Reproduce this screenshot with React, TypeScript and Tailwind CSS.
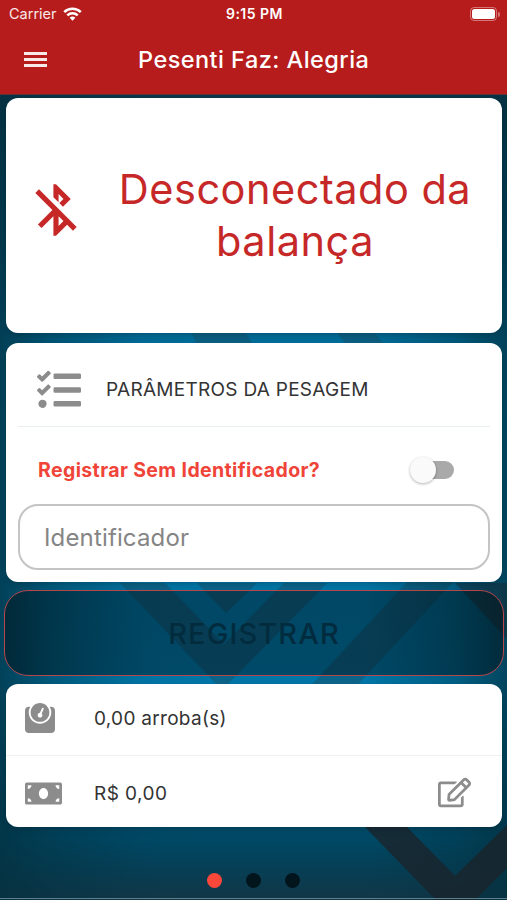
import { FaMoneyBill, FaRegEdit, FaTasks, FaWeight } from 'react-icons/fa';
import { MdBluetoothDisabled } from 'react-icons/md';

const Background: React.FC = () => (
  <svg
    className="absolute inset-0 -z-10 h-full w-full"
    viewBox="0 0 507 900"
    preserveAspectRatio="none"
    aria-hidden="true"
  >
    <defs>
      <linearGradient id="depth" x1="0" y1="0" x2="0" y2="1">
        <stop offset="0.1" stopColor="#0c3447" />
        <stop offset="0.25" stopColor="#00486a" />
        <stop offset="0.38" stopColor="#006c98" />
        <stop offset="0.75" stopColor="#0077a8" />
        <stop offset="0.88" stopColor="#005075" />
        <stop offset="0.935" stopColor="#004864" />
        <stop offset="0.965" stopColor="#063f56" />
        <stop offset="1" stopColor="#123646" />
      </linearGradient>
      <linearGradient id="sides" x1="0" y1="0" x2="1" y2="0">
        <stop offset="0" stopColor="#03303f" stopOpacity="0.75" />
        <stop offset="0.1" stopColor="#03303f" stopOpacity="0.42" />
        <stop offset="0.28" stopColor="#03303f" stopOpacity="0.04" />
        <stop offset="0.4" stopColor="#03303f" stopOpacity="0" />
        <stop offset="0.72" stopColor="#03303f" stopOpacity="0" />
        <stop offset="0.9" stopColor="#03303f" stopOpacity="0.35" />
        <stop offset="1" stopColor="#03303f" stopOpacity="0.7" />
      </linearGradient>
    </defs>
    <rect width="507" height="900" fill="url(#depth)" />
    <g fill="#17506a" fillOpacity="0.5">
      <path d="M120 583h45l59 61 60-61h43L222 690z" />
      <path d="M197 583h60l-31 30z" />
      <path d="M408 581h46L350 693h-46z" />
      <path d="M192 333h54l6 10h-56zM337 333h38l8 10h-38z" />
    </g>
    <rect width="507" height="900" fill="url(#sides)" />
    <path d="M455 583h52v56z" fill="#1b2830" fillOpacity="0.45" />
    <path d="M363 825h42l50 51 52-51v43l-32 32h-39z" fill="#1a242c" fillOpacity="0.8" />
    <path d="M0 898.5h507" stroke="#5c7f8d" />
  </svg>
);

const StatusBar: React.FC = () => (
  <div className="grid h-7 grid-cols-3 items-center pr-[7px] pl-[9px] leading-none">
    <div className="flex items-center gap-[6px]">
      <span className="text-[14.5px] text-white/90">Carrier</span>
      <svg width="19" height="14" viewBox="0 0 19 14" fill="none" stroke="#fff" strokeWidth="2.5">
        <path d="M1.2 5.1a11.8 11.8 0 0 1 16.6 0" />
        <path d="M4.3 8.3a7.4 7.4 0 0 1 10.4 0" />
        <path d="M9.5 13.8 6.6 10.8a4.2 4.2 0 0 1 5.8 0z" fill="#fff" stroke="none" />
      </svg>
    </div>
    <span className="text-center text-[14px] font-semibold tracking-[0.5px]">9:15 PM</span>
    <div className="flex items-center justify-end gap-px">
      <div className="h-[14px] w-[27px] rounded-[4px] border border-white/40 p-px">
        <div className="h-full w-full rounded-[2.5px] bg-white" />
      </div>
      <div className="h-[5px] w-[2px] rounded-r-full bg-white/40" />
    </div>
  </div>
);

const Header: React.FC = () => (
  <header className="h-[95px] border-b border-[#63303a] bg-[#b71c1c] text-white">
    <StatusBar />
    <div className="flex h-16 items-center">
      <button type="button" aria-label="Menu" className="mb-px ml-6 flex w-[23px] flex-col gap-[3px]">
        <span className="h-[3px] bg-white/90" />
        <span className="h-[3px] bg-white/90" />
        <span className="h-[3px] bg-white/90" />
      </button>
      <h1 className="ml-[91px] text-[23.5px] leading-none font-medium tracking-[0.45px] whitespace-nowrap">
        Pesenti Faz: Alegria
      </h1>
    </div>
  </header>
);

interface CardProps {
  children: React.ReactNode;
  className?: string;
}

const Card: React.FC<CardProps> = ({ children, className = '' }) => (
  <section className={`mx-[6px] w-[496px] rounded-[12px] bg-white shadow-md ${className}`}>
    {children}
  </section>
);

const dots = ['bg-[#f9483a]', 'bg-[#02151d]', 'bg-[#02151d]'];

export default function App() {
  return (
    <div className="relative isolate h-[900px] w-[507px] overflow-hidden font-['Inter',sans-serif] text-[#333]">
      <Background />
      <Header />

      <Card className="mt-[3px] flex h-[235px] items-center text-[#c62828]">
        <MdBluetoothDisabled className="mb-[12px] ml-[19px] shrink-0" size={62} />
        <p className="mb-px ml-[29px] w-[358px] text-center text-[41.5px] leading-[52px] tracking-[0.5px]">
          Desconectado da balança
        </p>
      </Card>

      <Card className="mt-[10px] h-[239px] px-3">
        <div className="flex h-[84px] items-center border-b border-[#e8eeee] pt-[10px]">
          <FaTasks className="ml-[19px] shrink-0 text-[#8c8c8c]" size={44} />
          <h2 className="mt-px ml-[25px] text-[19px] tracking-[0.28px] whitespace-nowrap">
            PARÂMETROS DA PESAGEM
          </h2>
        </div>
        <div className="flex h-[77px] items-center justify-between pt-[10px] pr-[36px] pl-5">
          <span className="text-[19.5px] font-bold tracking-[0.38px] whitespace-nowrap text-[#f04438]">
            Registrar Sem Identificador?
          </span>
          <button
            type="button"
            role="switch"
            aria-checked="false"
            className="mb-px flex h-[18px] w-[42px] items-center rounded-full bg-[#a9a9a9]"
          >
            <span className="-ml-[2px] h-[26px] w-[26px] shrink-0 rounded-full bg-[#fafafa] shadow-[0_1px_3px_rgba(0,0,0,0.3)]" />
          </button>
        </div>
        <div className="flex h-[66px] items-center rounded-[20px] border-2 border-[#c4c4c4] pt-px pl-[24px] text-[24px] tracking-[0.15px] text-[#858585]">
          Identificador
        </div>
      </Card>

      <button
        type="button"
        disabled
        className="mx-[4px] mt-[8px] flex h-[86px] w-[500px] items-center justify-center rounded-[24px] border-[1.5px] border-[#b5474b] bg-black/38 pt-px text-[29px] font-medium tracking-[1.1px] text-[#022c3e]"
      >
        REGISTRAR
      </button>

      <Card className="mt-[8px] h-[143px]">
        <div className="flex h-[72px] items-center border-b border-[#f1f1f1] pl-[19px]">
          <FaWeight className="mb-[3px] shrink-0 text-[#8c8c8c]" size={30} />
          <span className="ml-[39px] text-[19px] tracking-[0.3px]">0,00 arroba(s)</span>
        </div>
        <div className="flex h-[71px] items-center pt-[4px] pr-[31px] pl-[19px]">
          <FaMoneyBill className="mb-px shrink-0 text-[#8c8c8c]" size={37} />
          <span className="mt-px ml-[32px] text-[19px] tracking-[0.45px]">R$ 0,00</span>
          <FaRegEdit className="mb-[2px] ml-auto text-[#8c8c8c]" size={33} />
        </div>
      </Card>

      <div className="mt-[46px] flex justify-center gap-6">
        {dots.map((color, i) => (
          <span key={i} className={`h-[15px] w-[15px] rounded-full ${color}`} />
        ))}
      </div>
    </div>
  );
}
